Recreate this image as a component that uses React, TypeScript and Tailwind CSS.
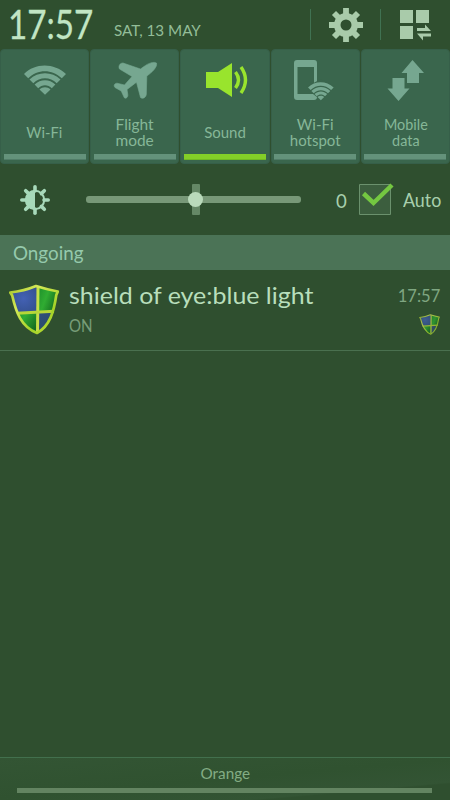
import React from "react";

function WifiIcon() {
  return (
    <svg className="h-[52px] w-[90px]" viewBox="0 0 90 52" fill="#76a790">
      <path d="M24 25C35 13.600 54 13.600 66 25L61.800 29.200C52 19.800 37.500 19.800 28.200 29.200Z" />
      <path d="M29.500 30.500C38 22 52 22 60.500 30.500L56.700 34.300C50 27.700 40 27.700 33.300 34.300Z" />
      <path d="M34.600 35.600C40.500 29.900 49.500 29.900 55.400 35.600L51.800 39.200C48 35.300 42 35.300 38.200 39.200Z" />
      <path d="M39.500 40.400C42.500 37.600 47.500 37.600 50.500 40.400L45 45.800Z" />
    </svg>
  );
}

function PlaneIcon() {
  return (
    <svg className="h-[52px] w-[90px]" viewBox="0 0 90 52" fill="#76a790">
      <path d="M66.500 14C64 12.300 58 14.300 54 17.500L50.500 20L33 14C30 14 28 17 29.500 20L42 27.500L34.500 36L27 34.200C24.500 34.300 23.300 36.500 25 38.500L31.200 42L34.300 48.700C36 50.200 38.200 48 37.800 45.500L37 40.500L46.500 33.200L50.500 48.500C52.500 50.500 56 48.500 56.300 45.500L56.800 27C62.500 23 67.500 18 66.500 14Z" stroke="#76a790" strokeWidth=".6" strokeLinejoin="round" />
    </svg>
  );
}

function SoundIcon() {
  return (
    <svg className="h-[52px] w-[90px]" viewBox="0 0 90 52" fill="#99e42d">
      <path d="M26 23H38L52 14V48L38 39H26Z" />
      <path d="M55.500 23Q61.500 31 55.500 39M61 18Q70 31 61 44" fill="none" stroke="#99e42d" strokeWidth="3.400" />
    </svg>
  );
}

function HotspotIcon() {
  return (
    <svg className="h-[52px] w-[90px]" viewBox="0 0 90 52" fill="#76a790">
      <path fillRule="evenodd" d="M27 11H44Q47 11 47 14V48Q47 51 44 51H27Q24 51 24 48V14Q24 11 27 11ZM27.500 18V45H44V18Z" />
      <path d="M36 38L51 30L66 38L52 52L43 45Z" fill="#3a664d" />
      <g transform="translate(23.400 23.300) scale(.61)">
        <path d="M24 25C35 13.600 54 13.600 66 25L61.800 29.200C52 19.800 37.500 19.800 28.200 29.200Z" />
        <path d="M29.500 30.500C38 22 52 22 60.500 30.500L56.700 34.300C50 27.700 40 27.700 33.300 34.300Z" />
        <path d="M34.600 35.600C40.500 29.900 49.500 29.900 55.400 35.600L51.800 39.200C48 35.300 42 35.300 38.200 39.200Z" />
        <path d="M39.500 40.400C42.500 37.600 47.500 37.600 50.500 40.400L45 45.800Z" />
      </g>
    </svg>
  );
}

function DataIcon() {
  return (
    <svg className="h-[52px] w-[90px]" viewBox="0 0 90 52" fill="#76a790">
      <path d="M52.500 11L64 24H59V34H47V24H41.500ZM32.500 29H44.500V39.500H49.500L38.500 52L27.500 39.500H32.500Z" />
    </svg>
  );
}

function Shield({ className }: { className: string }) {
  return (
    <svg className={className} viewBox="0 0 50 51">
      <defs>
        <radialGradient id="blue" cx=".5" cy=".5" r=".8">
          <stop stopColor="#4361b4" /><stop offset="1" stopColor="#2e4a80" />
        </radialGradient>
        <linearGradient id="green" x2="1" y2=".5">
          <stop stopColor="#1c8c2a" /><stop offset=".5" stopColor="#30ac32" /><stop offset="1" stopColor="#156d20" />
        </linearGradient>
        <linearGradient id="darkBlue" x2="1" y2="1">
          <stop stopColor="#304f80" /><stop offset="1" stopColor="#284a58" />
        </linearGradient>
        <linearGradient id="rim" x2="1" y2="1">
          <stop stopColor="#a5c52c" /><stop offset=".3" stopColor="#d5e957" /><stop offset=".7" stopColor="#a2d227" /><stop offset="1" stopColor="#c8df3c" />
        </linearGradient>
        <clipPath id="shieldClip"><path d="M2 8Q15 7 27 2Q38 5 48 7C46 25 41 42 28 49C12 44 7 26 2 8Z" /></clipPath>
      </defs>
      <g clipPath="url(#shieldClip)">
        <path d="M0 0H29V29H0Z" fill="url(#blue)" />
        <path d="M29 0H50V28H29Z" fill="url(#green)" />
        <path d="M0 29H29V51H0Z" fill="url(#green)" />
        <path d="M29 28H50V51H29Z" fill="url(#darkBlue)" />
      </g>
      <path d="M29 3L28.500 48" stroke="#c6df48" strokeWidth="3" />
      <path d="M8 29.300L45 27.300" stroke="#b6d638" strokeWidth="3" />
      <path d="M1.200 8.500Q15 7 27 2Q38 5.500 48.800 7.500L47.300 11C45 27 41 42 28 49C12 43 7 28 3.200 11.500Z" fill="none" stroke="url(#rim)" strokeWidth="2.700" strokeLinejoin="round" />
    </svg>
  );
}

function Tile({ icon, label, scale, active = false }: { icon: React.ReactNode; label: React.ReactNode; scale: string; active?: boolean }) {
  return (
    <div className="flex h-[115px] flex-col items-center rounded-[4px] border border-[#365f49] bg-[#3a664d]">
      <div className="-mt-px h-[52px] w-[90px]">{icon}</div>
      <div className={`mt-[13px] flex h-9 items-center text-center text-[15px] leading-[16px] text-[#86b798] ${scale}`}>{label}</div>
      <div className={`mt-[4px] h-[6px] w-[82px] border-b ${active ? "border-[#70b923] bg-[#83cf28]" : "border-[#517d68] bg-[#64927b]"}`} />
    </div>
  );
}

export default function App() {
  return (
    <div className="flex h-[800px] w-[450px] flex-col overflow-hidden bg-[#2f4f2f] font-['Lato',sans-serif] text-[#c1e5c4]">
      <header className="flex h-[49px] shrink-0">
        <div className="w-[104px] shrink-0 pl-[8px] text-[40px] leading-[48px]">
          <span className="inline-block origin-left scale-x-[.83] whitespace-nowrap [-webkit-text-stroke:.3px_#c1e5c4]">17:57</span>
        </div>
        <div className="w-[206px] pl-[10px] pt-[18px] text-[16px] leading-[24px] text-[#93bd98]">
          <span className="inline-block origin-left scale-x-[.95] whitespace-nowrap">SAT, 13 MAY</span>
        </div>
        <div className="mt-[9px] h-[31px] w-px bg-[#407252]" />
        <svg className="mt-[7px] ml-[17px] h-[36px] w-[36px]" viewBox="-18 -18 36 36" fill="#a9cbaa">
          <path fillRule="evenodd" d="M0-12A12 12 0 1 0 0 12A12 12 0 1 0 0-12ZM0-5.500A5.500 5.500 0 1 1 0 5.500A5.500 5.500 0 1 1 0-5.500Z" />
          {[0, 45, 90, 135, 180, 225, 270, 315].map((a) => (
            <path key={a} d="M-2.900-17H2.900V-11L4.500-9H-4.500L-2.900-11Z" transform={`rotate(${a})`} />
          ))}
        </svg>
        <div className="mt-[9px] ml-[16px] h-[31px] w-px bg-[#407252]" />
        <svg className="mt-[9px] ml-[18px] h-[32px] w-[34px]" viewBox="0 0 34 32" fill="#a9cbaa">
          <path d="M1 1H14V14H1ZM17 1H30V14H17ZM1 17H14V30H1ZM18 19H26V15.500L32 22H18ZM18 24.500H32V27.500H24V31.500Z" />
        </svg>
      </header>

      <section className="grid h-[115px] shrink-0 grid-cols-5 gap-x-px">
        <Tile icon={<WifiIcon />} label="Wi-Fi" scale="scale-x-[.98]" />
        <Tile icon={<PlaneIcon />} label={<>Flight<br />mode</>} scale="scale-x-[1.030]" />
        <Tile icon={<SoundIcon />} label="Sound" scale="scale-x-[1]" active />
        <Tile icon={<HotspotIcon />} label={<>Wi-Fi<br />hotspot</>} scale="scale-x-[1]" />
        <Tile icon={<DataIcon />} label={<>Mobile<br />data</>} scale="scale-x-[.96]" />
      </section>

      <section className="flex h-[71px] shrink-0 items-center pl-[19px]">
        <svg className="h-8 w-8 shrink-0" viewBox="-16 -16 32 32" fill="none" stroke="#a7d9ba">
          <circle r="9.200" strokeWidth="2" />
          <path d="M0-9.500A9.500 9.500 0 0 0 0 9.500Z" fill="#a7d9ba" stroke="none" />
          {[0, 45, 90, 135, 180, 225, 270, 315].map((a) => (
            <path key={a} d="M0-9V-13.200" strokeWidth="3.600" strokeLinecap="round" transform={`rotate(${a})`} />
          ))}
        </svg>
        <div className="relative ml-[35px] h-[7px] w-[215px] shrink-0 rounded-[3px] bg-[#789878]">
          <div className="absolute -top-[12px] left-[106px] h-[31px] w-2 rounded-[1px] bg-[#658866]" />
          <div className="absolute top-0 left-[105px] h-[7px] w-[10px] bg-[#789878]" />
          <div className="absolute -top-[4px] left-[102px] size-[15px] rounded-full bg-[#badabb]" />
        </div>
        <div className="ml-[35px] w-[23px] text-[20px] leading-6 text-[#a8cfad]">
          <span className="inline-block origin-left scale-x-[.93]">0</span>
        </div>
        <svg className="h-9 w-[36px] shrink-0" viewBox="0 0 36 36" fill="none">
          <path d="M.5 2.500H31.500V32.500H.5Z" fill="#3c5e3e" stroke="#6b916d" />
          <path d="M4.500 11.500L14.500 21L33 3" stroke="#74c741" strokeWidth="4.500" />
        </svg>
        <div className="ml-[8px] text-[19px] leading-6 text-[#a8cfad]">
          <span className="inline-block origin-left scale-x-[.94]">Auto</span>
        </div>
      </section>

      <div className="h-[35px] shrink-0 bg-[#4b7356] pl-[13px] text-[20px] leading-[35px] text-[#95c9ac]">
        <span className="inline-block origin-left scale-x-[.94]">Ongoing</span>
      </div>

      <section className="flex h-[81px] shrink-0 border-b border-[#4a704f]">
        <Shield className="mt-[14px] ml-[9px] h-[51px] w-[50px] shrink-0" />
        <div className="ml-[10px] w-[300px] pt-[8px]">
          <div className="h-[34px] text-[24px] leading-[34px] text-[#b8debb]">
            <span className="inline-block origin-left scale-x-[1.040] whitespace-nowrap">shield of eye:blue light</span>
          </div>
          <div className="text-[18px] leading-[26px] text-[#779d78]">
            <span className="inline-block origin-left scale-x-[.84]">ON</span>
          </div>
        </div>
        <div className="flex flex-1 flex-col items-end pr-[10px] pt-[12px] text-[18px] leading-[26px] text-[#7fa681]">
          <span className="inline-block origin-right scale-x-[.92]">17:57</span>
          <Shield className="mt-[6px] h-[21px] w-[21px] opacity-75" />
        </div>
      </section>

      <main className="flex-1" />

      <footer className="flex h-[43px] shrink-0 flex-col border-t border-[#42704d] bg-[linear-gradient(175deg,#335534,#305230_50%,#335434_78%,#2f4f2f_80%)]">
        <div className="h-[30px] text-center text-[15px] leading-[31px] text-[#83ac84]">
          <span className="inline-block scale-x-[1.020]">Orange</span>
        </div>
        <div className="mr-[18px] ml-[17px] h-[5px] bg-[#638461]" />
      </footer>
    </div>
  );
}
